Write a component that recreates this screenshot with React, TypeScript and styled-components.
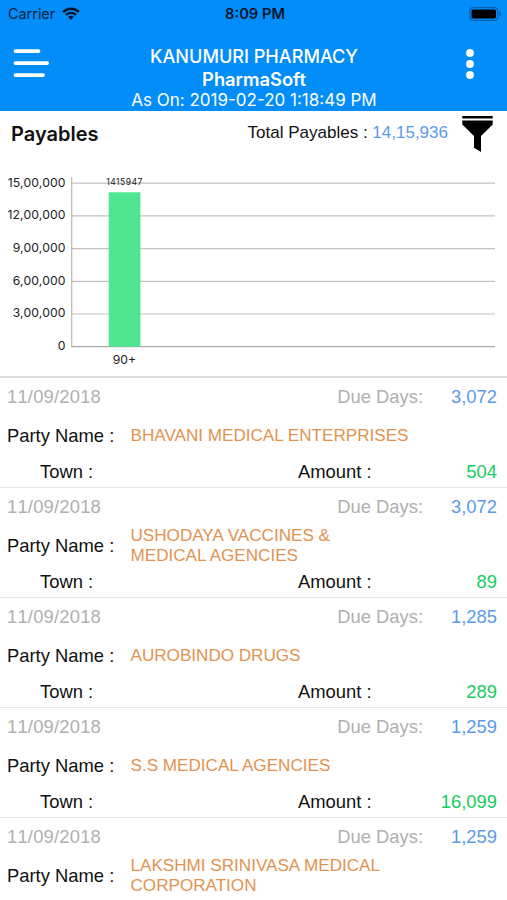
import styled, { createGlobalStyle } from 'styled-components';

const payables = [
  { party: 'BHAVANI MEDICAL ENTERPRISES', days: '3,072', amount: '504' },
  { party: 'USHODAYA VACCINES & MEDICAL AGENCIES', days: '3,072', amount: '89' },
  { party: 'AUROBINDO DRUGS', days: '1,285', amount: '289' },
  { party: 'S.S MEDICAL AGENCIES', days: '1,259', amount: '16,099' },
  { party: 'LAKSHMI SRINIVASA MEDICAL CORPORATION', days: '1,259' },
];

const ticks = [
  '15,00,000',
  '12,00,000',
  '9,00,000',
  '6,00,000',
  '3,00,000',
  '0',
];

function App() {
  return (
    <>
      <GlobalStyle />
      <Screen>
        <Header>
          <StatusBar>
            <Carrier>
              Carrier
              <WifiIcon />
            </Carrier>
            <Clock>8:09 PM</Clock>
            <BatteryIcon />
          </StatusBar>
          <NavBar>
            <MenuIcon />
            <Titles>
              <CompanyName>KANUMURI PHARMACY</CompanyName>
              <AppName>PharmaSoft</AppName>
              <AsOn>As On: 2019-02-20 1:18:49 PM</AsOn>
            </Titles>
            <MoreIcon />
          </NavBar>
        </Header>

        <Summary>
          <h1>Payables</h1>
          <Total>
            Total Payables : <span>14,15,936</span>
          </Total>
          <FilterIcon />
        </Summary>

        <PayablesChart />

        <List>
          {payables.map((item) => (
            <Row key={item.party}>
              <DateLine>
                <DateText>11/09/2018</DateText>
                <span>Due Days:</span>
                <DueValue>{item.days}</DueValue>
              </DateLine>
              <PartyLine>
                <PartyLabel>Party Name :</PartyLabel>
                <PartyName>{item.party}</PartyName>
              </PartyLine>
              {item.amount && (
                <TownLine>
                  <span>Town :</span>
                  <span>Amount :</span>
                  <Amount>{item.amount}</Amount>
                </TownLine>
              )}
            </Row>
          ))}
        </List>
      </Screen>
    </>
  );
}

export default App;

function WifiIcon() {
  return (
    <svg width='18' height='13' viewBox='0 0 18 13' fill='none'>
      <path d='M1.2 5.1a11 11 0 0 1 15.6 0' stroke='#03152a' strokeWidth='2.5' />
      <path d='M4 8a7.1 7.1 0 0 1 10 0' stroke='#03152a' strokeWidth='2.3' />
      <path d='M9 12.8 6.2 10a4 4 0 0 1 5.6 0z' fill='#03152a' />
    </svg>
  );
}

function BatteryIcon() {
  return (
    <svg width='33' height='14' viewBox='0 0 33 14'>
      <rect
        x='0.8'
        y='0.7'
        width='28'
        height='12.6'
        rx='3.5'
        fill='none'
        stroke='#0560ae'
        strokeWidth='1.2'
      />
      <rect x='2.5' y='2.4' width='24.5' height='9.2' rx='1.8' fill='#000' />
      <path d='M30.2 4.8c2.4 1 2.4 3.4 0 4.4z' fill='#0560ae' />
    </svg>
  );
}

function MenuIcon() {
  return (
    <svg width='36' height='30' viewBox='0 0 36 30'>
      <g stroke='#fff' strokeWidth='3.8' strokeLinecap='round'>
        <path d='M2.5 3.1H25.5' />
        <path d='M2.5 15.1H34.1' />
        <path d='M2.5 27.1H30' />
      </g>
    </svg>
  );
}

function MoreIcon() {
  return (
    <svg width='10' height='32' viewBox='0 0 10 32' fill='#fff'>
      <circle cx='5' cy='5' r='3.9' />
      <circle cx='5' cy='16' r='3.9' />
      <circle cx='5' cy='27' r='3.9' />
    </svg>
  );
}

function FilterIcon() {
  return (
    <svg width='31' height='37' viewBox='0 0 31 37'>
      <path d='M.3 0h30.4v2.4H.3zM.3 4.5h30.4v4L19 20v16l-7-4.2V20L.3 8.5z' />
    </svg>
  );
}

function PayablesChart() {
  return (
    <Chart width='507' height='221' viewBox='0 156 507 221'>
      {ticks.map((tick, i) => (
        <g key={tick}>
          <path
            d={`M71.5 ${183.2 + i * 32.7}H495`}
            stroke={tick === '0' ? '#aaa' : '#c2c2c2'}
            strokeWidth='1.2'
          />
          <text
            x='65.7'
            y={186.6 + i * 32.7}
            textAnchor='end'
            fontSize='12.2'
            letterSpacing='0.15'
          >
            {tick}
          </text>
        </g>
      ))}
      <path d='M71.7 177V347' stroke='#b8b8b8' strokeWidth='1.2' />
      <rect x='108.7' y='192.3' width='31.7' height='154.4' fill='#50e591' />
      <text
        x='124.6'
        y='185.3'
        textAnchor='middle'
        fontSize='8.6'
        letterSpacing='0.45'
      >
        1415947
      </text>
      <text x='124.3' y='363.6' textAnchor='middle' fontSize='12.2'>
        90+
      </text>
    </Chart>
  );
}

const GlobalStyle = createGlobalStyle`
  * {
    box-sizing: border-box;
  }
  body {
    margin: 0;
    background-color: #ffffff;
  }
`;

const Screen = styled.div`
  width: 507px;
  height: 900px;
  overflow: hidden;
  font-family: 'Liberation Sans', Arial, sans-serif;
  color: #111111;
  white-space: nowrap;
`;

const Header = styled.header`
  height: 110.5px;
  background-color: #028df9;
  font-family: Inter, sans-serif;
`;

const StatusBar = styled.div`
  display: grid;
  grid-template-columns: 1fr auto 1fr;
  align-items: center;
  height: 27px;
  padding: 0 5px 0 8px;
  > svg {
    justify-self: end;
  }
`;

const Carrier = styled.div`
  display: flex;
  align-items: center;
  gap: 7px;
  font-size: 14.4px;
  color: #03223f;
`;

const Clock = styled.div`
  font-size: 14.7px;
  font-weight: 600;
  color: #03152a;
`;

const NavBar = styled.div`
  display: grid;
  grid-template-columns: 36px 1fr 10px;
  padding: 18px 32px 0 13px;
  > svg {
    margin-top: 3px;
  }
`;

const Titles = styled.div`
  padding-right: 6px;
  text-align: center;
  color: #ffffff;
`;

const CompanyName = styled.div`
  font-size: 18.1px;
  font-weight: 500;
  line-height: 22px;
`;

const AppName = styled.div`
  font-size: 18.3px;
  font-weight: 600;
  line-height: 24px;
`;

const AsOn = styled.div`
  font-size: 17px;
  line-height: 19px;
`;

const Summary = styled.div`
  display: flex;
  align-items: flex-start;
  height: 45.5px;
  padding: 5px 14px 0 11px;
  > h1 {
    flex: 1;
    margin: 4px 0 0;
    font-family: Inter, sans-serif;
    font-size: 20px;
    font-weight: 600;
    line-height: 28px;
  }
`;

const Total = styled.div`
  margin: 7px 14px 0 0;
  font-size: 17px;
  line-height: 20px;
  > span {
    color: #5b9bea;
  }
`;

const Chart = styled.svg`
  display: block;
  font-family: Inter, sans-serif;
  fill: #222222;
`;

const List = styled.div`
  border-top: 2px solid #dedede;
  margin-top: -1px;
`;

const Row = styled.div`
  height: 110px;
  padding: 8px 10px 0 7px;
  border-bottom: 1px solid #e6e6e6;
  font-size: 18.4px;
`;

const DateLine = styled.div`
  display: grid;
  grid-template-columns: 1fr auto 74px;
  line-height: 22px;
  color: #b0b0b0;
`;

const DateText = styled.span`
  font-kerning: none;
  letter-spacing: 0.2px;
`;

const DueValue = styled.span`
  text-align: right;
  color: #5b9bea;
`;

const PartyLine = styled.div`
  display: flex;
  align-items: center;
  height: 55px;
`;

const PartyLabel = styled.span`
  width: 123.5px;
`;

const PartyName = styled.span`
  width: 279.5px;
  font-size: 17.1px;
  line-height: 19.5px;
  white-space: normal;
  color: #df9350;
`;

const TownLine = styled.div`
  display: grid;
  grid-template-columns: 258px 1fr auto;
  padding-left: 33px;
  line-height: 18px;
`;

const Amount = styled.span`
  color: #17cc60;
`;
